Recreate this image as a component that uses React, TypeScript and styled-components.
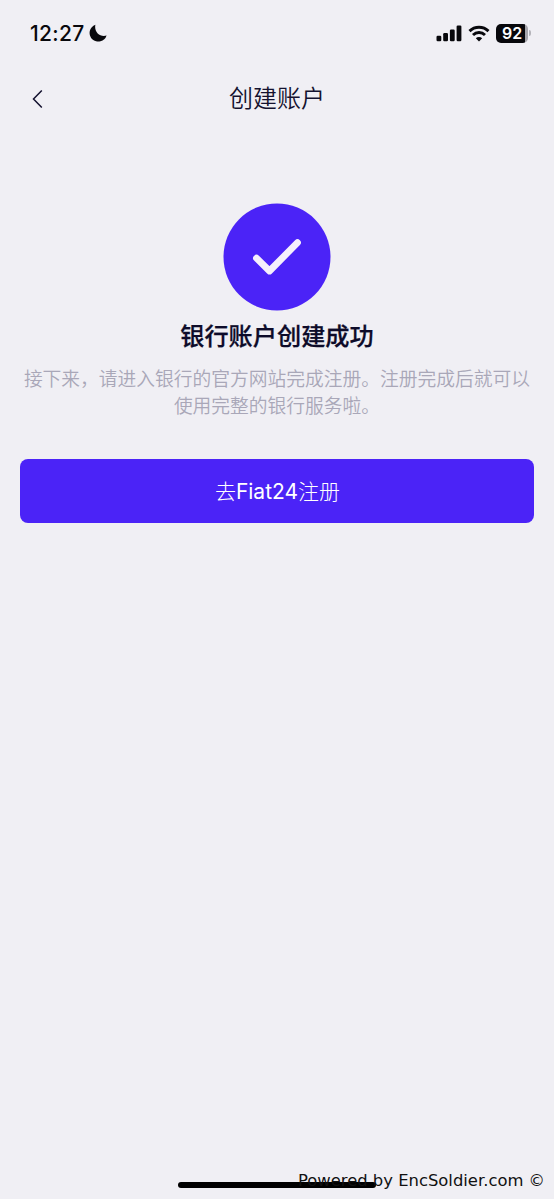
import React from 'react';
import styled, { createGlobalStyle } from 'styled-components';

const GlobalStyle = createGlobalStyle`
  * { box-sizing: border-box; }
  body { margin: 0; background: #f0eff4; }
`;

const Screen = styled.div`
  position: relative;
  display: flex;
  flex-direction: column;
  width: 554px;
  height: 1199px;
  overflow: hidden;
  background: #f0eff4;
  color: #14122f;
  font-family: Inter, 'Noto Sans CJK SC', sans-serif;
`;

const StatusBar = styled.header`
  display: flex;
  align-items: center;
  justify-content: space-between;
  height: 66px;
  padding: 0 23px 0 30px;
  color: #08080c;
`;

const StatusGroup = styled.div<{ $gap: number }>`
  display: flex;
  align-items: center;
  gap: ${({ $gap }) => $gap}px;
`;

const Clock = styled.span`
  padding-top: 1px;
  font-size: 21px;
  font-weight: 550;
  letter-spacing: 0.3px;
  line-height: 24px;
`;

const Battery = styled.div`
  display: flex;
  align-items: center;
  gap: 1px;
`;

const BatteryBody = styled.div`
  width: 32px;
  height: 19px;
  border-radius: 5px;
  background: linear-gradient(90deg, #08080c 29.5px, #a5a4aa 29.5px);
  color: #fff;
  font-size: 16px;
  font-weight: 600;
  line-height: 19px;
  text-align: center;
`;

const BatteryCap = styled.div`
  width: 2px;
  height: 6px;
  border-radius: 0 3px 3px 0;
  background: #b5b4ba;
`;

const NavBar = styled.nav`
  display: grid;
  grid-template-columns: 80px 1fr 80px;
  align-items: center;
  height: 64px;
`;

const BackButton = styled.button`
  display: flex;
  padding: 2px 0 0 30px;
  border: 0;
  background: none;
  color: inherit;
`;

const NavTitle = styled.h1`
  margin: 0;
  padding-top: 2px;
  font-size: 24px;
  font-weight: 350;
  line-height: 36px;
  text-align: center;
`;

const Content = styled.main`
  display: flex;
  flex-direction: column;
  align-items: center;
  padding: 73px 20px 0;
`;

const SuccessMark = styled.svg`
  width: 108px;
  height: 108px;
`;

const Heading = styled.h2`
  margin: 8px 0 0;
  font-size: 24.2px;
  font-weight: 500;
  line-height: 36px;
  color: #0d0b29;
  -webkit-text-stroke: 0.25px currentColor;
`;

const Description = styled.p`
  margin: 11px 0 0;
  color: #a9a7b8;
  font-size: 18.75px;
  font-weight: 350;
  line-height: 27px;
  text-align: center;
  white-space: nowrap;
`;

const PrimaryButton = styled.button`
  width: 100%;
  height: 64px;
  margin-top: 39px;
  padding: 2px 0 0 1px;
  border: 0;
  border-radius: 8px;
  background: #4b23f7;
  color: #fff;
  font-family: inherit;
  font-size: 21px;
  font-weight: 300;
  line-height: 62px;
`;

const Latin = styled.span`
  font-weight: 400;
`;

const HomeIndicator = styled.div`
  position: absolute;
  left: 178px;
  bottom: 11px;
  width: 198px;
  height: 6px;
  border-radius: 3px;
  background: #000;
`;

const Credit = styled.div`
  position: absolute;
  right: 9px;
  bottom: 8px;
  color: #111;
  font-family: 'DejaVu Sans', sans-serif;
  font-size: 16.4px;
  line-height: 20px;
  white-space: nowrap;
`;

const MoonIcon = () => (
  <svg width="18" height="18" viewBox="0 0 18 18" fill="currentColor">
    <path d="M6.4 0.7A8.7 8.7 0 1 0 17.6 11.5C11 13.5 4.8 8 6.4 0.7Z" />
  </svg>
);

const SignalIcon = () => (
  <svg width="26" height="17" viewBox="0 0 26 17" fill="currentColor">
    <rect x="0.5" y="10.7" width="4.8" height="5.5" rx="1.2" />
    <rect x="7.2" y="8" width="4.8" height="8.2" rx="1.2" />
    <rect x="13.9" y="4.5" width="4.8" height="11.7" rx="1.2" />
    <rect x="20.6" y="0.6" width="4.8" height="15.6" rx="1.2" />
  </svg>
);

const WifiIcon = () => (
  <svg width="22" height="17" viewBox="0 0 22 17">
    <g fill="none" stroke="currentColor" strokeWidth="2.9">
      <path d="M1.5 6.1a13.6 13.6 0 0 1 19 0" />
      <path d="M5 10a8.6 8.6 0 0 1 12 0" />
    </g>
    <path d="M11 16.4l-3.2-3.2a4.6 4.6 0 0 1 6.4 0z" fill="currentColor" />
  </svg>
);

export default function App() {
  return (
    <Screen>
      <GlobalStyle />
      <StatusBar>
        <StatusGroup $gap={5}>
          <Clock>12:27</Clock>
          <MoonIcon />
        </StatusGroup>
        <StatusGroup $gap={6}>
          <SignalIcon />
          <WifiIcon />
          <Battery>
            <BatteryBody>92</BatteryBody>
            <BatteryCap />
          </Battery>
        </StatusGroup>
      </StatusBar>
      <NavBar>
        <BackButton aria-label="返回">
          <svg width="16" height="20" viewBox="0 0 16 20" fill="none" stroke="currentColor" strokeWidth="1.5">
            <path d="M11.8 1.4L3.5 10l8.3 8.6" />
          </svg>
        </BackButton>
        <NavTitle>创建账户</NavTitle>
      </NavBar>
      <Content>
        <SuccessMark viewBox="0 0 108 108">
          <circle cx="54" cy="54" r="53.5" fill="#4b23f7" />
          <path
            d="M33.5 55.2L46.5 68L74.5 39.6"
            fill="none"
            stroke="#f5f0fc"
            strokeWidth="6.8"
            strokeLinecap="round"
            strokeLinejoin="round"
          />
        </SuccessMark>
        <Heading>银行账户创建成功</Heading>
        <Description>
          接下来，请进入银行的官方网站完成注册。注册完成后就可以
          <br />
          使用完整的银行服务啦。
        </Description>
        <PrimaryButton>
          去<Latin>Fiat24</Latin>注册
        </PrimaryButton>
      </Content>
      <HomeIndicator />
      <Credit>Powered by EncSoldier.com ©</Credit>
    </Screen>
  );
}
